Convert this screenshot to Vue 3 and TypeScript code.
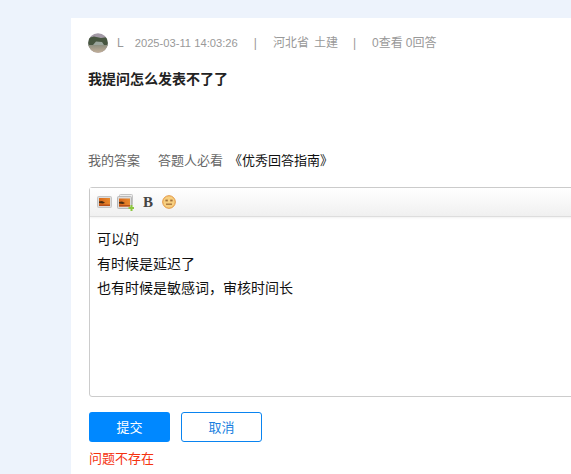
<template>
  <div class="page">
    <div class="card">
      <div class="meta">
        <svg class="avatar" viewBox="0 0 20 20">
          <defs>
            <clipPath id="av"><circle cx="10" cy="10" r="9.8" /></clipPath>
            <linearGradient id="ground" x1="0" y1="0" x2="0" y2="1">
              <stop offset="0" stop-color="#8d8f80" />
              <stop offset="1" stop-color="#c4b09a" />
            </linearGradient>
            <linearGradient id="pic" x1="0" y1="0" x2="1" y2="0">
              <stop offset="0" stop-color="#d8681c" />
              <stop offset="1" stop-color="#e88a2e" />
            </linearGradient>
            <filter id="soft"><feGaussianBlur stdDeviation="0.5" /></filter>
          </defs>
          <g clip-path="url(#av)">
            <rect width="20" height="20" fill="#a39aa6" />
            <path d="M0 5 L6 3.5 L13 5 L20 4 V13 H0 Z" fill="#46573f" filter="url(#soft)" />
            <path d="M5 12 L8 8.5 L14 9 L16 12 Z" fill="#9aa59c" />
            <rect y="12" width="20" height="8" fill="url(#ground)" />
          </g>
        </svg>
        <span class="user">L</span>
        <span class="time">2025-03-11 14:03:26</span>
        <span class="sep">|</span>
        <span class="place">河北省</span>
        <span class="major">土建</span>
        <span class="sep sep2">|</span>
        <span class="views">0查看</span>
        <span class="answers">0回答</span>
      </div>

      <h3 class="title">我提问怎么发表不了了</h3>

      <div class="tabs">
        <span>我的答案</span>
        <span class="must">答题人必看</span>
        <span class="guide">《优秀回答指南》</span>
      </div>

      <div class="editor">
        <div class="toolbar">
          <svg class="tool-img" viewBox="0 0 15 14">
            <rect x="0.5" y="1.5" width="14" height="11" rx="1" fill="#dcdcdc" stroke="#c4c4c4" />
            <rect x="2" y="3" width="11" height="8" fill="url(#pic)" />
            <path d="M2 6.5 L5 6 L8 7.5 L6 8.5 L2 8 Z" fill="#4a2b10" />
            <path d="M2 9.5 H13 V11 H2 Z" fill="#b8501a" />
          </svg>
          <svg class="tool-multi" viewBox="0 0 17 17">
            <rect x="2.5" y="0.5" width="13" height="11" rx="1" fill="#eee" stroke="#c4c4c4" />
            <rect x="0.5" y="2.5" width="14" height="12" rx="1" fill="#dcdcdc" stroke="#b8b8b8" />
            <rect x="2" y="4.5" width="11" height="8" fill="url(#pic)" />
            <path d="M2 8 L5 7.5 L8 9 L6 10 L2 9.5 Z" fill="#4a2b10" />
            <path d="M2 11 H13 V12.5 H2 Z" fill="#b8501a" />
            <path d="M11.5 13 H13.5 V11 H15.5 V13 H17 V15 H15.5 V17 H13.5 V15 H11.5 Z" fill="#8cc63f" />
          </svg>
          <span class="tool-bold">B</span>
          <svg class="tool-emoji" viewBox="0 0 14 14">
            <circle cx="7" cy="7" r="6.3" fill="#f7cf80" stroke="#e2933c" />
            <rect x="3.4" y="4.6" width="2.4" height="1.8" fill="#a2703a" />
            <rect x="8.2" y="4.6" width="2.4" height="1.8" fill="#a2703a" />
            <path d="M4 9.2 H10" stroke="#a2703a" stroke-width="1.3" />
          </svg>
        </div>
        <div class="body">
          <p>可以的</p>
          <p>有时候是延迟了</p>
          <p>也有时候是敏感词，审核时间长</p>
        </div>
      </div>

      <div class="actions">
        <button class="btn primary">提交</button>
        <button class="btn ghost">取消</button>
      </div>
      <div class="error">问题不存在</div>
    </div>
  </div>
</template>

<script setup lang="ts">
</script>

<style>
html, body {
  margin: 0;
  overflow: hidden;
}
</style>

<style scoped>
.page {
  width: 571px;
  height: 474px;
  overflow: hidden;
  box-sizing: border-box;
  padding: 18px 0 0 71px;
  background: #edf3fc;
  font-family: "Liberation Sans", "Noto Sans CJK SC", sans-serif;
}

.card {
  width: 600px;
  height: 470px;
  box-sizing: border-box;
  padding: 15px 0 0 17px;
  background: #fff;
}

.meta {
  display: flex;
  align-items: flex-start;
  height: 20px;
  font-size: 12px;
  line-height: 20px;
  color: #999;
}
.avatar {
  width: 20px;
  height: 20px;
  margin-right: 9px;
}
.user { margin-right: 11px; }
.time { font-size: 11.2px; }
.sep { margin: 0 16px 0 16px; }
.sep2 { margin: 0 16px 0 15px; }
.place { margin-right: 5px; }
.views { margin-right: 3px; }

.title {
  margin: 16px 0 0;
  font-size: 14px;
  line-height: 20px;
  font-weight: 700;
  color: #222;
}

.tabs {
  display: flex;
  margin-top: 62px;
  font-size: 13px;
  line-height: 20px;
  color: #666;
}
.must { margin-left: 18px; }
.guide {
  margin-left: 6px;
  color: #111;
}

.editor {
  width: 560px;
  height: 210px;
  margin: 16px 0 0 1px;
  border: 1px solid #ccc;
  border-radius: 3px;
  box-sizing: border-box;
}
.toolbar {
  display: flex;
  align-items: center;
  height: 28px;
  padding-left: 7px;
  background: linear-gradient(#fff, #f0f0f0);
  border-bottom: 1px solid #ddd;
  box-shadow: 0 1px 2px rgba(0, 0, 0, 0.06);
}
.tool-img { width: 15px; height: 14px; }
.tool-multi { width: 17px; height: 17px; margin-left: 5px; }
.tool-bold {
  margin-left: 9px;
  font-family: "Liberation Serif", serif;
  font-size: 15px;
  font-weight: 700;
  color: #444;
}
.tool-emoji { width: 14px; height: 14px; margin-left: 9px; }

.body {
  padding: 0 7px;
  font-size: 14px;
  color: #111;
}
.body p {
  margin: 0;
  line-height: 24.5px;
}
.body p:first-child { margin-top: 10px; }

.actions {
  display: flex;
  gap: 11px;
  margin: 15px 0 0 1px;
}
.btn {
  width: 81px;
  height: 30px;
  padding: 0 0 2px;
  border-radius: 3px;
  font-family: inherit;
  font-size: 13px;
  box-sizing: border-box;
}
.primary {
  border: none;
  background: #0088ff;
  color: #fff;
}
.ghost {
  border: 1px solid #0a84f0;
  background: #fff;
  color: #1a7fe0;
}

.error {
  margin: 8px 0 0 1px;
  font-size: 13px;
  line-height: 18px;
  color: #f5320f;
}
</style>
